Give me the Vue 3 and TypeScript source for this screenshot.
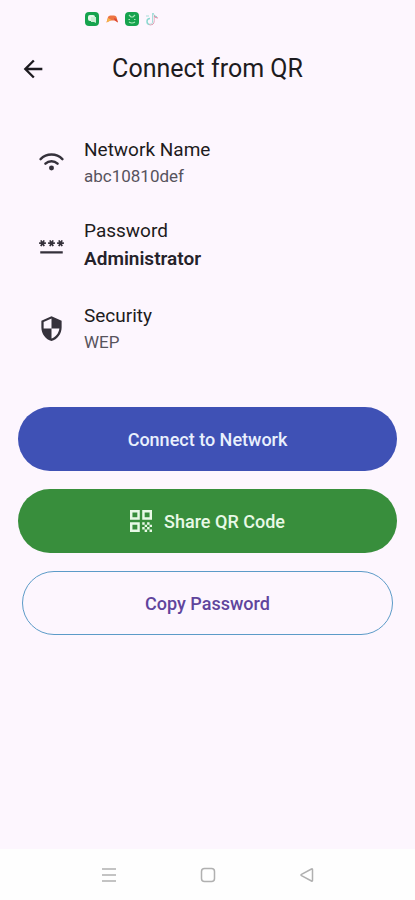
<script setup lang="ts">
interface Detail {
  label: string
  value: string
  icon: 'wifi' | 'password' | 'security'
  strong?: boolean
}

const details: Detail[] = [
  { label: 'Network Name', value: 'abc10810def', icon: 'wifi' },
  { label: 'Password', value: 'Administrator', icon: 'password', strong: true },
  { label: 'Security', value: 'WEP', icon: 'security' },
]
</script>

<template>
  <div class="screen">
    <div class="status" aria-hidden="true">
      <svg viewBox="0 0 14 14">
        <rect width="14" height="14" rx="4" fill="#16a34e" />
        <rect x="3" y="3" width="7" height="6" rx="2" fill="#e4f8e9" />
        <path d="M6 5h5v6l-2-1H6z" fill="#c9eed3" />
      </svg>
      <svg viewBox="0 0 14 14">
        <path d="M1.500 10.500 3 5Q3.500 3.500 5.500 3.500h3.500Q11 3.500 11.500 5l1.500 5.500L9.500 8.500h-4z" fill="#ed7442" />
        <path d="M1.500 10.500 3 6l3.500 2z" fill="#f5b54a" />
        <path d="m9 6 2.500 1 1.500 3.500L9.500 8z" fill="#dc4438" />
      </svg>
      <svg viewBox="0 0 14 14">
        <rect width="14" height="14" rx="4" fill="#16a34e" />
        <path d="m4 3 2 2h2l2-2M3.500 7.500h1.500M9 7.500h1.500M4 10q3 2 6 0" fill="none" stroke="#a9e8ba" stroke-width="1.200" />
      </svg>
      <svg viewBox="0 0 14 14">
        <path d="M8 1v8.500a3 3 0 1 1-3-3M8 2q1 3 4 3" fill="none" stroke="#8bd8d0" stroke-width="1.500" />
        <path d="M9 3v7a3 3 0 0 1-5 2M9 4q1 2 4 2" fill="none" stroke="#e58ba6" stroke-width="1" />
        <path d="M8.500 2.500V9.500a2.800 2.800 0 0 1-4.500 2" fill="none" stroke="#f8f4fa" stroke-width=".8" />
        <path d="M1 4h3" stroke="#a9ddd8" stroke-width="1" />
      </svg>
    </div>

    <header class="bar">
      <button class="back" type="button" aria-label="Back">
        <svg viewBox="0 0 24 24" fill="currentColor">
          <path d="M20 11H7.830l5.590-5.590L12 4l-8 8 8 8 1.410-1.410L7.830 13H20v-2z" />
        </svg>
      </button>
      <h1>Connect from QR</h1>
    </header>

    <main>
      <dl class="details">
        <div v-for="item in details" :key="item.label" class="row">
          <svg v-if="item.icon === 'wifi'" viewBox="0 0 24 24" aria-hidden="true">
            <g fill="none" stroke="currentColor" stroke-width="2.200" stroke-linecap="round">
              <path d="M2.300 9a13.600 13.600 0 0 1 19.400 0" />
              <path d="M6.600 13a7.900 7.900 0 0 1 10.800 0" />
            </g>
            <circle cx="12" cy="16.900" r="2.200" fill="currentColor" />
          </svg>
          <svg v-else-if="item.icon === 'password'" viewBox="0 0 24 24" fill="currentColor" aria-hidden="true">
            <path d="M2 17h20v2H2v-2zm1.150-4.050L4 11.470l.85 1.480 1.300-.75-.85-1.480H7v-1.500H5.300l.85-1.470L4.850 7 4 8.470 3.150 7l-1.300.75.85 1.470H1v1.500h1.700l-.85 1.480 1.300.75zm6.700-.75l1.300.75.85-1.480.85 1.480 1.300-.75-.85-1.480H15v-1.500h-1.700l.85-1.470-1.300-.75L12 8.470 11.150 7l-1.300.75.85 1.470H9v1.500h1.700l-.85 1.480zM23 9.220h-1.700l.85-1.470-1.300-.75L20 8.470 19.150 7l-1.300.75.85 1.470H17v1.500h1.700l-.85 1.480 1.300.75.85-1.480.85 1.480 1.300-.75-.85-1.480H23v-1.500z" />
          </svg>
          <svg v-else viewBox="0 0 24 24" fill="currentColor" aria-hidden="true">
            <path d="M12 1L3 5v6c0 5.550 3.840 10.740 9 12 5.160-1.260 9-6.450 9-12V5l-9-4zm0 10.990h7c-.53 4.120-3.280 7.790-7 8.940V12H5V6.300l7-3.110v8.800z" />
          </svg>
          <div class="text">
            <dt>{{ item.label }}</dt>
            <dd :class="{ strong: item.strong }">{{ item.value }}</dd>
          </div>
        </div>
      </dl>

      <div class="actions">
        <button type="button" class="connect">Connect to Network</button>
        <button type="button" class="share">
          <svg viewBox="3 3 18 18" fill="currentColor" aria-hidden="true">
            <path d="M3 11h8V3H3v8zm2-6h4v4H5V5zM3 21h8v-8H3v8zm2-6h4v4H5v-4zM13 3v8h8V3h-8zm6 6h-4V5h4v4zM19 19h2v2h-2zM13 13h2v2h-2zM15 15h2v2h-2zM13 17h2v2h-2zM15 19h2v2h-2zM17 17h2v2h-2zM17 13h2v2h-2zM19 15h2v2h-2z" />
          </svg>
          Share QR Code
        </button>
        <button type="button" class="copy">Copy Password</button>
      </div>
    </main>

    <nav class="system" aria-label="System navigation">
      <button type="button" aria-label="Recent apps">
        <svg viewBox="0 0 16 16"><path d="M1 2h14M1 8h14M1 14h14" /></svg>
      </button>
      <button type="button" aria-label="Home">
        <svg viewBox="0 0 16 16"><rect x="1.500" y="1.500" width="13" height="13" rx="3" /></svg>
      </button>
      <button type="button" aria-label="Back">
        <svg viewBox="0 0 16 16"><path d="M13.500 2.500v11q0 1-1 .5L2.500 8.700q-1-.7 0-1.400L12.500 2q1-.5 1 .5z" /></svg>
      </button>
    </nav>
  </div>
</template>

<style>
body {
  background: #fdf6fe;
}
</style>

<style scoped>
.screen {
  min-height: 100vh;
  display: flex;
  flex-direction: column;
  background: #fdf6fe;
  color: #1d1b20;
  font-family: Roboto, "Liberation Sans", sans-serif;
}

button {
  font: inherit;
  border: 0;
  padding: 0;
  background: none;
  cursor: pointer;
}

.status {
  display: flex;
  gap: 6px;
  padding: 12px 85px 0;
}

.status svg {
  width: 14px;
  height: 14px;
}

.bar {
  display: grid;
  grid-template-columns: 28px 1fr 28px;
  align-items: center;
  padding: 19px 19px 0;
  height: 48px;
}

.back {
  display: flex;
  color: #1d1b20;
}

.back svg {
  width: 28px;
  height: 28px;
}

h1 {
  margin: 0;
  text-align: center;
  font-size: 25px;
  line-height: 36px;
  font-weight: 400;
}

main {
  flex: 1;
}

.details {
  display: flex;
  flex-direction: column;
  gap: 29px;
  margin: 0;
  padding: 43px 38px 0;
}

.row {
  display: flex;
  align-items: center;
  gap: 19px;
}

.row > svg {
  width: 27px;
  height: 27px;
  color: #35313b;
}

dt {
  font-size: 19px;
  line-height: 28px;
}

dd {
  margin: 0;
  font-size: 17px;
  line-height: 24px;
  color: #57535d;
}

dd.strong {
  font-size: 19px;
  line-height: 28px;
  font-weight: 600;
  color: #25222a;
}

.actions {
  display: flex;
  flex-direction: column;
  gap: 18px;
  padding: 53px 18px 0;
}

.actions button {
  display: flex;
  align-items: center;
  justify-content: center;
  gap: 12px;
  height: 64px;
  border-radius: 32px;
  font-size: 18px;
  font-weight: 500;
}

.actions .connect {
  background: #3f51b5;
  color: #e9f0fd;
}

.actions .share {
  background: #388e3c;
  color: #e8f9e6;
}

.share svg {
  width: 22px;
  height: 22px;
}

.actions .copy {
  margin: 0 4px;
  border: 1px solid #5c9bc8;
  color: #60449c;
}

.system {
  display: flex;
  justify-content: center;
  gap: 83px;
  padding: 18px 0 17px;
  background: #fefefe;
}

.system button {
  display: flex;
}

.system svg {
  width: 16px;
  height: 16px;
  fill: none;
  stroke: #b0b0b0;
  stroke-width: 1.500;
}
</style>
